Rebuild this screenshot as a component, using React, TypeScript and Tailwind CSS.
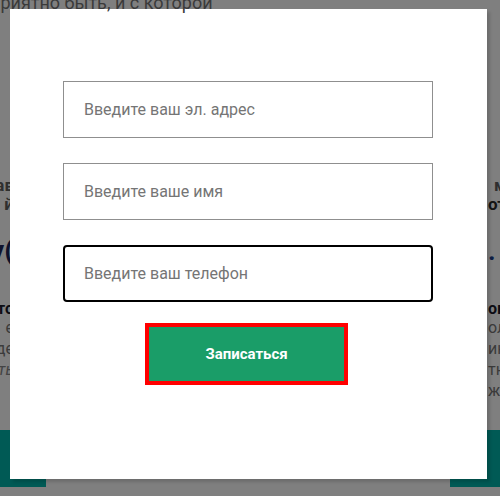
import { useEffect, useRef } from "react";

export default function App() {
  const phoneRef = useRef<HTMLInputElement>(null);

  useEffect(() => {
    phoneRef.current?.focus();
  }, []);

  return (
    <div className="relative h-[496px] w-[500px] overflow-hidden bg-white font-['Roboto',sans-serif]">
      {/* page behind the popup */}
      <div className="flex h-full flex-col">
        <div className="flex h-[430px] justify-between pt-[176px]">
          {/* left column, cut by the popup */}
          <div className="ml-[-66px] flex w-[80px] flex-col text-right">
            <div className="h-[19px] text-[17px] font-bold leading-[19px] text-[#5e5e5e]">ав</div>
            <div className="h-[19px] text-[17px] font-bold leading-[19px] text-[#5e5e5e]">й</div>
            <div className="mt-[21px] h-[32px] text-[28px] font-bold leading-[32px] text-[#1d2458]">у(</div>
            <div className="mt-[33px] h-[17px] text-[16px] font-bold leading-[17px] text-[#1a1a2a]">то</div>
            <div className="h-[21px] text-[16px] leading-[21px] text-[#777]">е</div>
            <div className="h-[21px] text-[16px] leading-[21px] text-[#777]">де</div>
            <div className="h-[21px] text-[16px] italic leading-[21px] text-[#888]">ть</div>
          </div>

          {/* right column, cut by the popup */}
          <div className="mr-[-68px] flex w-[80px] flex-col text-left">
            <div className="h-[19px] pl-[6px] text-[17px] font-bold leading-[19px] text-[#5e5e5e]">м</div>
            <div className="h-[19px] text-[17px] font-bold leading-[19px] text-[#2a2a2a]">от</div>
            <div className="mt-[21px] h-[32px] text-[26px] font-bold leading-[32px] text-[#1d3f8a]">. ·</div>
            <div className="mt-[33px] h-[17px] text-[16px] font-bold leading-[17px] text-[#1a1a2a]">ок</div>
            <div className="h-[21px] text-[16px] leading-[21px] text-[#777]">ол</div>
            <div className="h-[21px] text-[16px] leading-[21px] text-[#777]">ик</div>
            <div className="h-[21px] text-[16px] leading-[21px] text-[#777]">тн</div>
            <div className="h-[21px] text-[16px] leading-[21px] text-[#777]">ж</div>
          </div>
        </div>

        {/* teal buttons at the bottom of the page */}
        <div className="flex justify-between">
          <div className="h-[57px] w-[46px] bg-[#00b4aa]" />
          <div className="h-[57px] w-[50px] bg-[#00b4aa]" />
        </div>
      </div>

      {/* dim overlay */}
      <div className="absolute inset-0 bg-black/50" />

      {/* popup */}
      <div className="absolute left-[10px] top-[9px] flex h-[470px] w-[477px] flex-col bg-white pl-[53px] pr-[54px] pt-[72px] shadow-[3px_3px_3px_rgba(0,0,0,0.15)]">
        <input
          type="email"
          placeholder="Введите ваш эл. адрес"
          className="h-[57px] w-full border border-[#8f8f8f] bg-white px-[20px] text-[16px] text-[#333] outline-none placeholder:text-[#757575]"
        />
        <input
          type="text"
          placeholder="Введите ваше имя"
          className="mt-[25px] h-[57px] w-full border border-[#8f8f8f] bg-white px-[20px] text-[16px] text-[#333] outline-none placeholder:text-[#757575]"
        />
        <input
          ref={phoneRef}
          type="tel"
          placeholder="Введите ваш телефон"
          className="mt-[25px] h-[57px] w-full rounded-[4px] border-2 border-black bg-white px-[19px] text-[16px] text-[#333] outline-none placeholder:text-[#757575]"
        />
        <button className="ml-[82px] mt-[21px] h-[62px] w-[203px] border-4 border-[#ff0000] bg-[#1a9d68] text-[15px] font-bold text-white">
          Записаться
        </button>
      </div>

      {/* stray heading line sitting above the popup */}
      <div className="absolute left-[-10px] top-[-8px] whitespace-nowrap text-[18px] leading-[22px] text-[#3a3a3a]">
        приятно быть, и с которой
      </div>
    </div>
  );
}
